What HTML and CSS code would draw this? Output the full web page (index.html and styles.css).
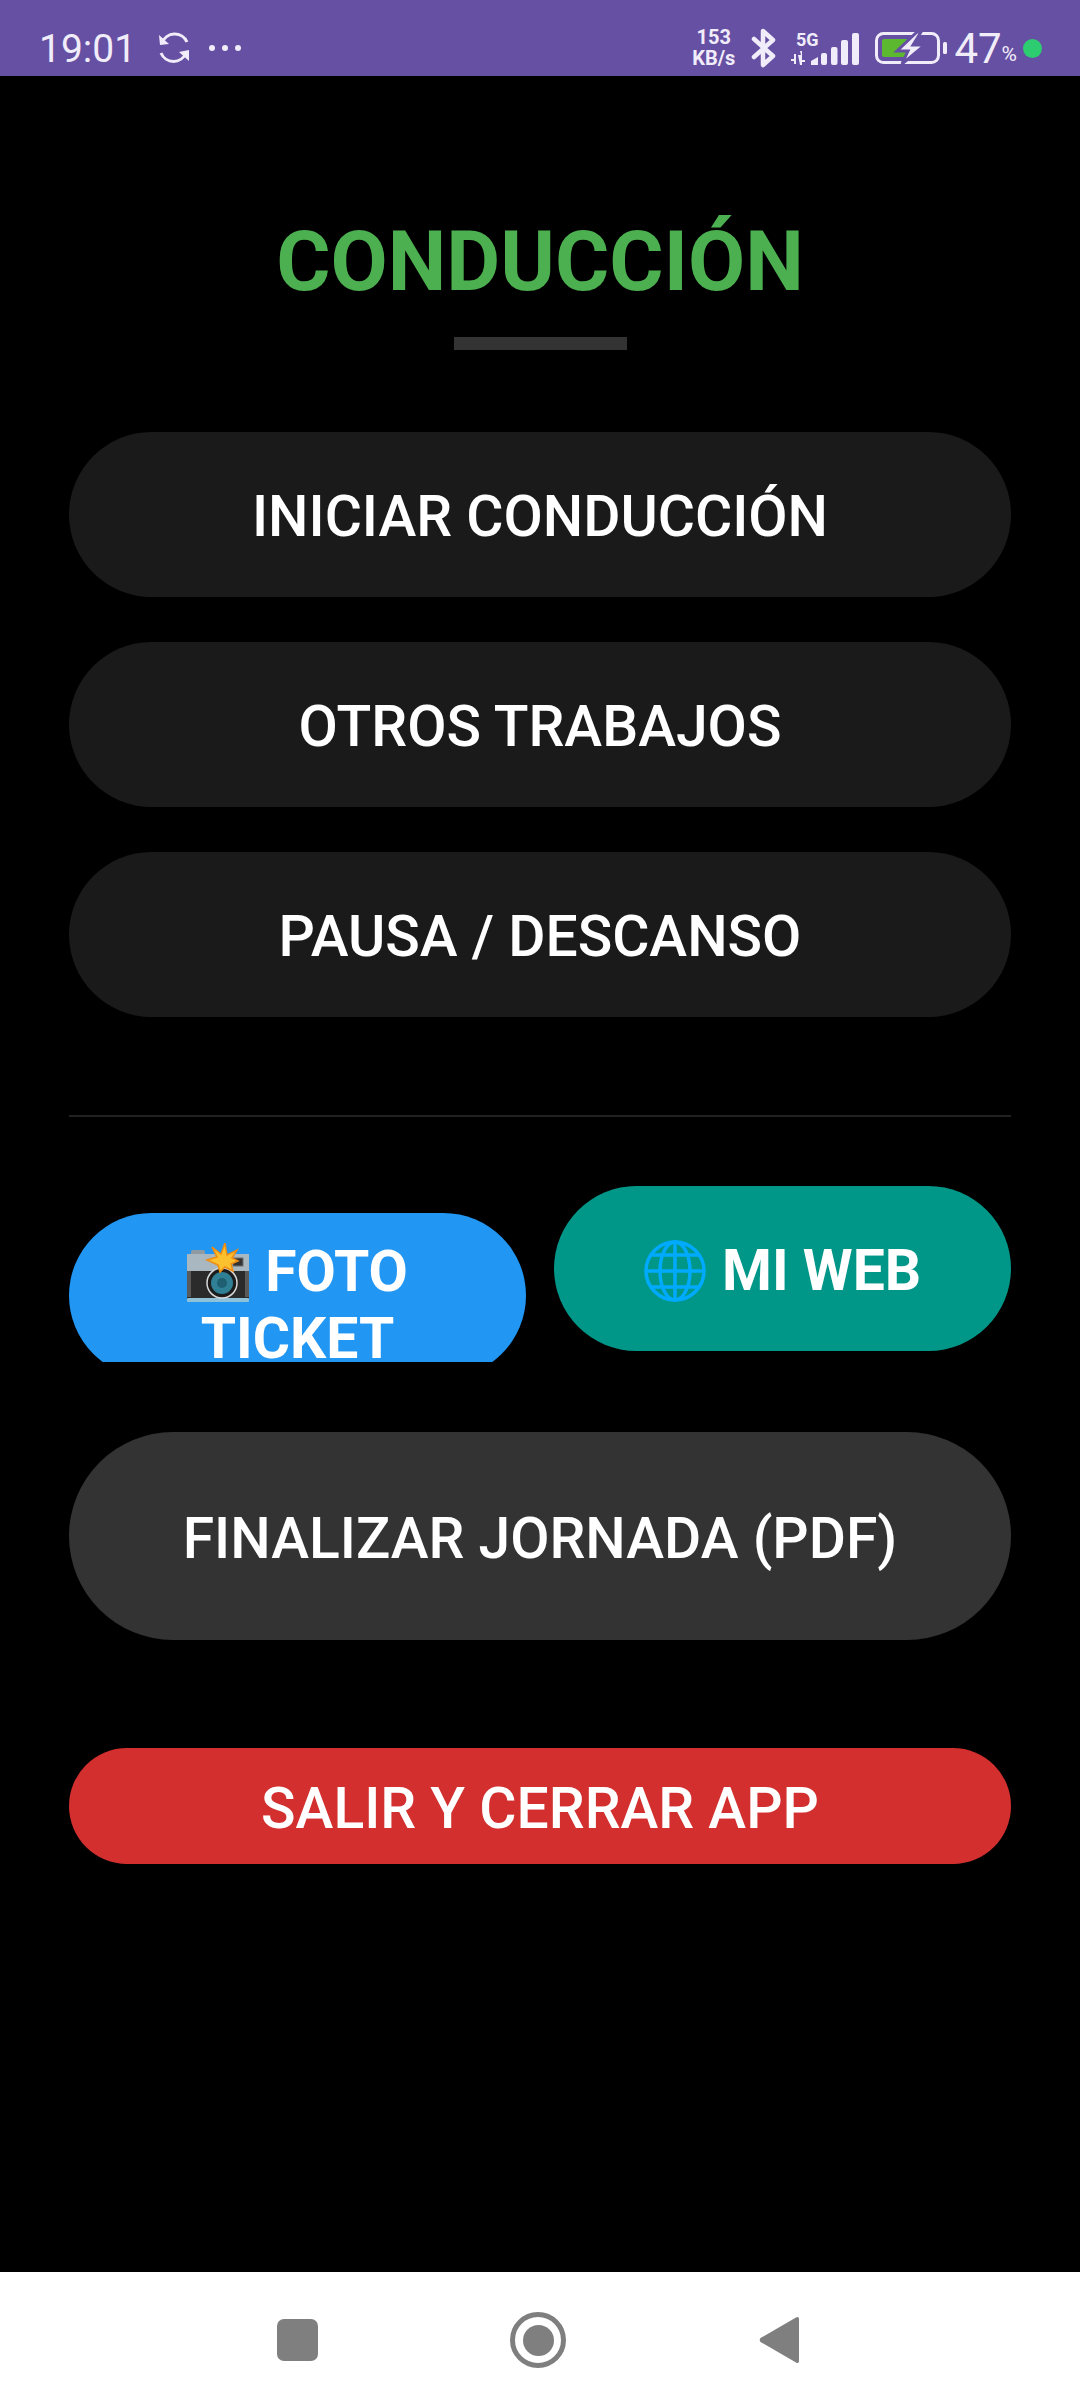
FILE: index.html
```html
<!DOCTYPE html>
<html lang="es">
<head>
  <meta charset="UTF-8" />
  <meta name="viewport" content="width=device-width, initial-scale=1.0"/>
  <title>Conducción</title>
  <link rel="stylesheet" href="styles.css">
</head>
<body>
  <!-- Barra de estado -->
  <div class="status-bar">
    <span class="clock">19:01</span>
    <svg class="sync-icon" width="34" height="32" viewBox="0 0 34 32" fill="none" stroke="#f1ecf9" stroke-width="3">
      <path d="M5 11 A13.5 13.5 0 0 1 30 10"/>
      <path d="M29 21 A13.5 13.5 0 0 1 4 21"/>
      <path d="M2 3 L3 13 L12 12 Z" fill="#f1ecf9" stroke="none"/>
      <path d="M32 29 L32 18 L22 20 Z" fill="#f1ecf9" stroke="none"/>
    </svg>
    <div class="dots"><i></i><i></i><i></i></div>
    <div class="status-right">
      <div class="net-speed"><span>153</span><span>KB/s</span></div>
      <svg class="bt-icon" width="26" height="40" viewBox="0 0 26 40" fill="none" stroke="#f1ecf9" stroke-width="4.5" stroke-linecap="round" stroke-linejoin="round">
        <path d="M3 11 L22 28 L12 37 L12 3 L22 12 L3 29"/>
      </svg>
      <svg class="signal-icon" width="70" height="38" viewBox="0 -3 70 38">
        <text x="6" y="13" class="signal-text">5G</text>
        <path d="M1 26h3v-5h2v10H4v-3H1zM8 22h3l-1-4h2v9h3v2h-3v3h-2z" fill="#f1ecf9"/>
        <path d="M21 32v-4l7-4v8z" fill="#f1ecf9"/>
        <rect x="31" y="20" width="6" height="12" rx="2" fill="#f1ecf9"/>
        <rect x="41" y="14" width="6.500" height="18" rx="2" fill="#f1ecf9"/>
        <rect x="51" y="7" width="7" height="25" rx="2" fill="#f1ecf9"/>
        <rect x="62" y="0" width="7" height="32" rx="2" fill="#f1ecf9"/>
      </svg>
      <svg class="battery-icon" width="72" height="32" viewBox="0 0 72 32">
        <rect x="1.500" y="1.500" width="62" height="29" rx="7" fill="none" stroke="#f1ecf9" stroke-width="3"/>
        <rect x="7" y="7" width="26" height="18" rx="2" fill="#5cb82e"/>
        <path d="M42 0 L22 19 L33 19 L27 32 L50 13 L38 13 L46 0 Z" fill="#f1ecf9" stroke="#6650a3" stroke-width="3"/>
        <rect x="68" y="10" width="4" height="12" rx="1.500" fill="#f1ecf9"/>
      </svg>
      <span class="battery-level">47</span><span class="battery-pct">%</span>
      <i class="green-dot"></i>
    </div>
  </div>

  <div class="screen">
    <h1 class="title">CONDUCCIÓN</h1>
    <div class="title-line"></div>

    <div class="btn btn-dark">INICIAR CONDUCCIÓN</div>
    <div class="btn btn-dark">OTROS TRABAJOS</div>
    <div class="btn btn-dark">PAUSA / DESCANSO</div>

    <div class="divider"></div>

    <div class="btn-row">
      <div class="btn btn-foto">
        <span>
          <svg class="emoji" width="62" height="60" viewBox="0 0 62 60">
            <rect x="4" y="7" width="14" height="6" rx="2" fill="#8f9ba3"/>
            <rect x="0" y="11" width="62" height="17" fill="#a9b8c0"/>
            <rect x="0" y="28" width="62" height="28" fill="#2b2b2b"/>
            <rect x="0" y="28" width="4" height="26" fill="#5a5a5a"/>
            <rect x="58" y="28" width="4" height="26" fill="#5a5a5a"/>
            <rect x="0" y="55" width="62" height="4" rx="1" fill="#8fc1d8"/>
            <rect x="46" y="15" width="10" height="8" fill="#333" stroke="#6e6e6e"/>
            <circle cx="35" cy="40" r="15" fill="#1c1c1c" stroke="#d8d8d8" stroke-width="1.500"/>
            <circle cx="35" cy="40" r="11" fill="#2f7f95"/>
            <circle cx="35" cy="40" r="5" fill="#1f5f72"/>
            <path d="M38 0 L40 12 L50 7 L45 15 L51 18 L44 21 L46 28 L38 24 L33 29 L31 22 L20 17 L30 14 L25 4 L34 11 Z" fill="#fbc02d" stroke="#ef8c12" stroke-width="1.500"/>
          </svg>
          FOTO TICKET
        </span>
      </div>
      <div class="btn btn-web">
        <span>
          <svg class="emoji" width="62" height="62" viewBox="0 0 62 62" fill="none" stroke="#00aaff" stroke-width="3.500">
            <circle cx="31" cy="31" r="29"/>
            <ellipse cx="31" cy="31" rx="15" ry="29"/>
            <path d="M31 2V60M2 31H60M7 15H55M7 47H55"/>
          </svg>
          MI WEB
        </span>
      </div>
    </div>

    <div class="btn btn-finish">FINALIZAR JORNADA (PDF)</div>
    <div class="btn btn-exit">SALIR Y CERRAR APP</div>
  </div>

  <!-- Barra de navegacion -->
  <div class="nav-bar">
    <div class="nav-square"></div>
    <div class="nav-home"><i></i></div>
    <svg class="nav-back" width="40" height="48" viewBox="0 0 40 48">
      <path d="M37 1.500 Q40 0 40 3 V45 Q40 48 37 46.500 L1.500 26 Q0 24 1.500 22 Z" fill="#7f7f7f"/>
    </svg>
  </div>
</body>
</html>
```

FILE: styles.css
```css
body, html {
  margin: 0;
  padding: 0;
  height: 100%;
  background: #000;
  font-family: Roboto, 'Noto Sans', sans-serif;
}

body {
  display: flex;
  flex-direction: column;
  height: 2408px;
}

/* barra de estado */
.status-bar {
  height: 76px;
  flex-shrink: 0;
  background: #6650a3;
  color: #f1ecf9;
  display: flex;
  align-items: center;
  padding: 20px 38px 0 39px;
  box-sizing: border-box;
}

.clock {
  font-size: 39px;
  margin-top: 2px;
}

.sync-icon {
  margin-left: 21px;
}

.dots {
  display: flex;
  gap: 7px;
  margin-left: 18px;
}

.dots i {
  width: 6px;
  height: 6px;
  border-radius: 50%;
  background: #f1ecf9;
}

.status-right {
  margin-left: auto;
  display: flex;
  align-items: center;
}

.net-speed {
  display: flex;
  flex-direction: column;
  align-items: center;
  font-size: 20px;
  font-weight: 700;
  line-height: 21px;
}

.bt-icon {
  margin-left: 16px;
}

.signal-icon {
  margin-left: 13px;
  margin-top: 1px;
}

.signal-text {
  font-size: 18px;
  font-weight: 700;
  fill: #f1ecf9;
}

.battery-icon {
  margin-left: 15px;
}

.battery-level {
  font-size: 42px;
  margin-left: 7px;
}

.battery-pct {
  font-size: 21px;
  margin-top: 12px;
}

.green-dot {
  width: 19px;
  height: 19px;
  border-radius: 50%;
  background: #2ecc71;
  margin-left: 6px;
}

/* contenido */
.screen {
  flex: 1;
  padding: 0 69px;
}

.title {
  margin: 139px 0 0;
  text-align: center;
  font-size: 83px;
  font-weight: 700;
  line-height: 94px;
  color: #4caf50;
}

.title-line {
  width: 173px;
  height: 13px;
  background: #333;
  margin: 28px auto 82px;
}

.btn {
  display: flex;
  justify-content: center;
  align-items: center;
  text-align: center;
  color: #fff;
  font-size: 57px;
  font-weight: 500;
  border-radius: 90px;
  padding-top: 4px;
  box-sizing: border-box;
}

.btn-dark {
  height: 165px;
  background: #1a1a1a;
  margin-bottom: 45px;
}

.divider {
  height: 2px;
  background: #222;
  margin: 98px 0 69px;
}

.btn-row {
  display: grid;
  grid-template-columns: 1fr 1fr;
  align-items: start;
  gap: 28px;
  margin-bottom: 54px;
}

.btn-row .btn {
  height: 165px;
  font-weight: 700;
}

.btn-foto {
  background: #2196f3;
  margin-top: 27px;
  padding: 25px 58px 0;
  align-items: flex-start;
  clip-path: inset(0 0 16px 0);
}

.btn-web {
  background: #009688;
}

.emoji {
  vertical-align: -12px;
  margin-right: 2px;
}

.btn-finish {
  height: 208px;
  background: #333;
  border-radius: 104px;
  margin-bottom: 108px;
}

.btn-exit {
  height: 116px;
  background: #d32f2f;
  border-radius: 58px;
}

/* barra de navegacion */
.nav-bar {
  height: 136px;
  flex-shrink: 0;
  background: #fff;
  display: flex;
  align-items: center;
  padding-left: 277px;
  box-sizing: border-box;
}

.nav-square {
  width: 41px;
  height: 42px;
  border-radius: 7px;
  background: #7f7f7f;
}

.nav-home {
  width: 56px;
  height: 56px;
  border: 5px solid #7f7f7f;
  border-radius: 50%;
  box-sizing: border-box;
  display: flex;
  align-items: center;
  justify-content: center;
  margin-left: 192px;
}

.nav-home i {
  width: 31px;
  height: 31px;
  border-radius: 50%;
  background: #7f7f7f;
}

.nav-back {
  margin-left: 193px;
}
```
